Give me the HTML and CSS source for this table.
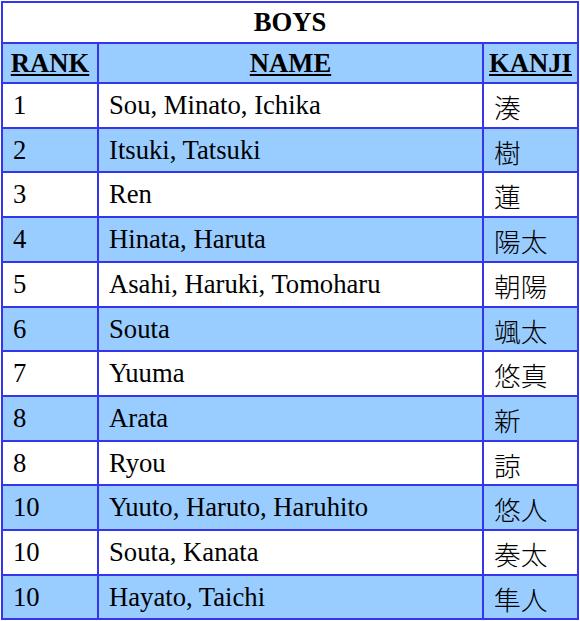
FILE: index.html
```html
<!DOCTYPE html>
<html>
<head>
<meta charset="utf-8">
<link rel="stylesheet" href="styles.css">
</head>
<body>
<table class="ranking">
  <colgroup>
    <col class="c-rank">
    <col class="c-name">
    <col class="c-kanji">
  </colgroup>
  <tr class="title"><th colspan="3">BOYS</th></tr>
  <tr class="head"><th><u>RANK</u></th><th><u>NAME</u></th><th><u>KANJI</u></th></tr>
  <tr class="odd"><td>1</td><td>Sou, Minato, Ichika</td><td class="kanji">湊</td></tr>
  <tr class="even"><td>2</td><td>Itsuki, Tatsuki</td><td class="kanji">樹</td></tr>
  <tr class="odd"><td>3</td><td>Ren</td><td class="kanji">蓮</td></tr>
  <tr class="even"><td>4</td><td>Hinata, Haruta</td><td class="kanji">陽太</td></tr>
  <tr class="odd"><td>5</td><td>Asahi, Haruki, Tomoharu</td><td class="kanji">朝陽</td></tr>
  <tr class="even"><td>6</td><td>Souta</td><td class="kanji">颯太</td></tr>
  <tr class="odd"><td>7</td><td>Yuuma</td><td class="kanji">悠真</td></tr>
  <tr class="even"><td>8</td><td>Arata</td><td class="kanji">新</td></tr>
  <tr class="odd"><td>8</td><td>Ryou</td><td class="kanji">諒</td></tr>
  <tr class="even"><td>10</td><td>Yuuto, Haruto, Haruhito</td><td class="kanji">悠人</td></tr>
  <tr class="odd"><td>10</td><td>Souta, Kanata</td><td class="kanji">奏太</td></tr>
  <tr class="even"><td>10</td><td>Hayato, Taichi</td><td class="kanji">隼人</td></tr>
</table>
</body>
</html>
```
FILE: styles.css
```css
html, body {
  margin: 0;
  padding: 0;
  background: #ffffff;
}
body {
  padding: 1px 0 0 1px;
  font-family: "Liberation Serif", "Noto Sans CJK JP", serif;
  color: #000000;
}
.ranking {
  border-collapse: collapse;
  table-layout: fixed;
  width: 576px;
  border: 2px solid #3535ee;
  font-size: 26.67px;
}
.c-rank { width: 96px; }
.c-name { width: 385px; }
.c-kanji { width: 95px; }
.ranking th,
.ranking td {
  border: 2px solid #3535ee;
  padding: 1px 9px 1px 10px;
  line-height: 40.7px;
}
.ranking th {
  text-align: center;
  font-weight: bold;
}
.title th {
  background: #ffffff;
  line-height: 39px;
  padding: 0 9px;
}
.head th {
  background: #99ccff;
  line-height: 38px;
  padding: 0 4px;
}
.ranking td {
  text-align: left;
}
.odd td { background: #ffffff; }
.even td { background: #99ccff; }
.ranking td.kanji {
  font-family: "Noto Sans CJK JP", sans-serif;
  font-weight: 300;
  line-height: 38.7px;
  padding: 4px 9px 0 10px;
}
```
